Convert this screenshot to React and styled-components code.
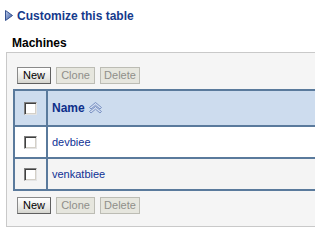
import React from "react";
import styled, { createGlobalStyle } from "styled-components";

const FONT = `"Liberation Sans", Arial, sans-serif`;

const Global = createGlobalStyle`
  html, body { margin: 0; padding: 0; background: #ffffff; overflow: hidden; }
  body { font-family: ${FONT}; font-size: 11px; }
`;

const Page = styled.div`
  width: 315px;
  height: 249px;
  overflow: hidden;
  padding-top: 9px;
  box-sizing: border-box;
`;

const LinkRow = styled.a`
  display: flex;
  align-items: center;
  gap: 4px;
  margin-left: 5px;
  height: 13px;
  color: #153a8c;
  font-weight: bold;
  font-size: 12px;
  text-decoration: none;
  cursor: pointer;
`;

const SectionTitle = styled.div`
  margin: 15px 0 0 12px;
  font-weight: bold;
  font-size: 12px;
  color: #000;
  height: 13px;
  line-height: 13px;
`;

const Panel = styled.div`
  margin: 2px 0 0 6px;
  width: 400px;
  background: #f5f5f5;
  border: 1px solid #c9c9c9;
  padding: 14px 0 12px 6px;
  box-sizing: border-box;
`;

const Toolbar = styled.div`
  display: flex;
  gap: 5px;
  margin-left: 4px;
  height: 17px;
  margin-top: ${(p) => p.$top || 0}px;
  margin-bottom: ${(p) => p.$bottom || 0}px;
`;

const Button = styled.button`
  font-family: ${FONT};
  font-size: 11px;
  width: ${(p) => p.$w}px;
  height: 17px;
  padding: 0;
  line-height: 13px;
  text-align: center;
  box-sizing: border-box;
  color: ${(p) => (p.disabled ? "#8f8f8a" : "#000")};
  background: ${(p) =>
    p.disabled ? "#e6e6de" : "linear-gradient(#ffffff, #e8e8e4 65%, #d4d4ce)"};
  border: 1px solid ${(p) => (p.disabled ? "#bcbcb4" : "#8a8a8a")};
  border-right-color: ${(p) => (p.disabled ? "#bcbcb4" : "#5f5f5f")};
  border-bottom-color: ${(p) => (p.disabled ? "#bcbcb4" : "#5f5f5f")};
  border-radius: 0;
  cursor: ${(p) => (p.disabled ? "default" : "pointer")};
`;

const Table = styled.table`
  border-collapse: collapse;
  width: 390px;
  border: 2px solid #5a7a9c;
`;

const HeadCell = styled.th`
  background: #cddcee;
  height: 34px;
  padding: 0;
  text-align: left;
  border: 2px solid #5a7a9c;
  border-top: none;
  width: ${(p) => p.$w || "auto"};
`;

const Cell = styled.td`
  height: 30px;
  padding: 0;
  background: ${(p) => (p.$alt ? "#f4f4f4" : "#ffffff")};
  border: 2px solid #5a7a9c;
  width: ${(p) => p.$w || "auto"};
`;

const CheckWrap = styled.div`
  display: flex;
  justify-content: center;
  align-items: center;
`;

const Check = styled.span`
  display: block;
  width: 13px;
  height: 13px;
  box-sizing: border-box;
  background: #fff;
  border: 1px solid;
  border-color: #808080 #e4e4e4 #e4e4e4 #808080;
  box-shadow: inset 1px 1px 0 #404040, inset -1px -1px 0 #d4d0c8;
`;

const HeadLabel = styled.span`
  display: flex;
  align-items: center;
  gap: 4px;
  margin-left: 4px;
  color: #0e2f8a;
  font-weight: bold;
  font-size: 12px;
`;

const RowLink = styled.a`
  margin-left: 4px;
  color: #0f3195;
  font-size: 11px;
  text-decoration: none;
`;

const Tri = () => (
  <svg width="8" height="11" viewBox="0 0 8 11">
    <defs>
      <linearGradient id="tg" x1="0" y1="0" x2="1" y2="1">
        <stop offset="0" stopColor="#c4d2ee" />
        <stop offset="1" stopColor="#2c4f9a" />
      </linearGradient>
    </defs>
    <polygon points="0.5,0.5 7.5,5.5 0.5,10.5" fill="url(#tg)" stroke="#34508f" strokeWidth="1" />
  </svg>
);

const chevron = (dy) =>
  `0.5,${5.5 + dy} 6.5,${0.5 + dy} 12.5,${5.5 + dy} 11,${7 + dy} 6.5,${3.2 + dy} 2,${7 + dy}`;

const SortIcon = () => (
  <svg width="13" height="12" viewBox="0 0 13 12">
    <polygon points={chevron(0)} fill="#d2ddf0" stroke="#7089bd" strokeWidth="0.9" strokeLinejoin="round" />
    <polygon points={chevron(4)} fill="#d2ddf0" stroke="#7089bd" strokeWidth="0.9" strokeLinejoin="round" />
  </svg>
);

const Buttons = (props) => (
  <Toolbar {...props}>
    <Button $w={34}>New</Button>
    <Button $w={39} disabled>Clone</Button>
    <Button $w={40} disabled>Delete</Button>
  </Toolbar>
);

const rows = ["devbiee", "venkatbiee"];

export default function App() {
  return (
    <Page>
      <Global />
      <LinkRow>
        <Tri />
        Customize this table
      </LinkRow>
      <SectionTitle>Machines</SectionTitle>
      <Panel>
        <Buttons $bottom={5} />
        <Table>
          <thead>
            <tr>
              <HeadCell $w="31px">
                <CheckWrap>
                  <Check />
                </CheckWrap>
              </HeadCell>
              <HeadCell>
                <HeadLabel>
                  Name <SortIcon />
                </HeadLabel>
              </HeadCell>
            </tr>
          </thead>
          <tbody>
            {rows.map((r, i) => (
              <tr key={r}>
                <Cell $w="31px" $alt={i % 2 === 1}>
                  <CheckWrap>
                    <Check />
                  </CheckWrap>
                </Cell>
                <Cell $alt={i % 2 === 1}>
                  <RowLink>{r}</RowLink>
                </Cell>
              </tr>
            ))}
          </tbody>
        </Table>
        <Buttons $top={6} />
      </Panel>
    </Page>
  );
}
